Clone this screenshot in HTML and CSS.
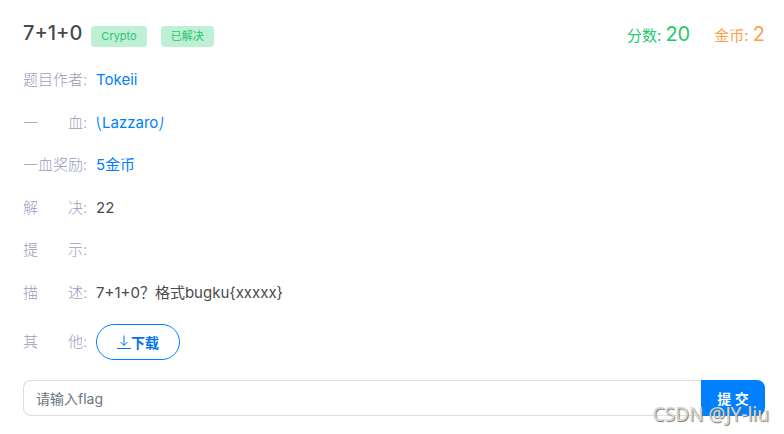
FILE: index.html
```html
<!DOCTYPE html>
<html lang="zh-CN">
<head>
<meta charset="utf-8">
<meta name="viewport" content="width=device-width, initial-scale=1">
<title>7+1+0</title>
<link rel="stylesheet" href="styles.css">
</head>
<body>
<main class="challenge">
  <header class="header">
    <h1 class="title">7+1+0</h1>
    <div class="badges">
      <span class="badge">Crypto</span>
      <span class="badge">已解决</span>
    </div>
    <div class="stats">
      <span class="stat stat-score">分数: <span class="stat-value">20</span></span>
      <span class="stat stat-coin">金币: <span class="stat-value">2</span></span>
    </div>
  </header>
  <dl class="details">
    <div class="row"><dt>题目作者:</dt><dd><a href="#">Tokeii</a></dd></div>
    <div class="row"><dt>一　　血:</dt><dd><a href="#"><span class="bracket">⎝</span>Lazzaro<span class="bracket">⎠</span></a></dd></div>
    <div class="row"><dt>一血奖励:</dt><dd class="reward">5金币</dd></div>
    <div class="row"><dt>解　　决:</dt><dd>22</dd></div>
    <div class="row"><dt>提　　示:</dt><dd></dd></div>
    <div class="row"><dt>描　　述:</dt><dd>7+1+0？格式bugku{xxxxx}</dd></div>
    <div class="row row-action"><dt>其　　他:</dt><dd>
      <button class="download" type="button">
        <svg class="icon" viewBox="0 0 14 14" aria-hidden="true"><path d="M7 0.5V10.5M3.5 7L7 10.5L10.5 7M0 13.5H14"/></svg>下载
      </button>
    </dd></div>
  </dl>
  <form class="flag-form">
    <input class="flag-input" type="text" placeholder="请输入flag" aria-label="flag">
    <button class="submit" type="submit">提 交</button>
  </form>
</main>
<div class="watermark">CSDN @JY-liu</div>
</body>
</html>
```
FILE: styles.css
```css
* {
  box-sizing: border-box;
}

body {
  margin: 0;
  background: #fff;
  color: #4a4a4a;
  font-family: Inter, "Noto Sans CJK SC", sans-serif;
  font-size: 15px;
  line-height: 1.5;
}

.challenge {
  padding: 18px 19px 18px 23px;
}

.header {
  display: flex;
  align-items: center;
  height: 30px;
  margin-bottom: 21px;
}

.title {
  margin: 0;
  font-size: 20px;
  font-weight: 500;
}

.badges {
  display: flex;
  gap: 14px;
  margin-left: 9px;
  padding-top: 6px;
}

.badge {
  height: 21px;
  padding: 0 10px;
  border-radius: 4px;
  background: #bfefd4;
  color: #28c76f;
  font-size: 11px;
  line-height: 21px;
  white-space: nowrap;
}

.stats {
  display: flex;
  gap: 24px;
  margin-left: auto;
  padding-top: 1px;
  white-space: nowrap;
}

.stat-score {
  color: #28c76f;
}

.stat-coin {
  color: #ff9f43;
}

.stat-value {
  font-size: 20px;
}

.details {
  display: flex;
  flex-direction: column;
  gap: 20px;
  margin: 0 0 20px;
}

.row {
  display: flex;
  align-items: center;
  height: 1.5em;
}

.row-action {
  height: 36px;
}

dt {
  width: 73px;
  color: #9a9dbc;
  font-weight: 300;
}

dd {
  margin: 0;
}

a,
.reward {
  color: #0080ff;
  text-decoration: none;
}

.bracket {
  font-size: 12px;
}

.download {
  display: flex;
  align-items: center;
  height: 36px;
  padding: 0 20px;
  border: 1px solid #0080ff;
  border-radius: 18px;
  background: #fff;
  color: #0073e6;
  font: 700 14px Inter, "Noto Sans CJK SC", sans-serif;
}

.icon {
  width: 14px;
  height: 14px;
  fill: none;
  stroke: currentColor;
}

.flag-form {
  display: flex;
}

.flag-input {
  flex: 1;
  min-width: 0;
  height: 36px;
  padding: 0 12px;
  border: 1px solid #ddd;
  border-right: 0;
  border-radius: 8px 0 0 8px;
  font: 14px Inter, "Noto Sans CJK SC", sans-serif;
}

.flag-input::placeholder {
  color: #6c757d;
}

.submit {
  width: 64px;
  height: 36px;
  padding: 0;
  border: 0;
  border-radius: 0 8px 8px 0;
  background: #0080ff;
  color: #fff;
  font: 700 14px Inter, "Noto Sans CJK SC", sans-serif;
}

.watermark {
  position: absolute;
  right: 15px;
  bottom: 8px;
  color: #d8d8d8;
  font-family: "Noto Sans", sans-serif;
  font-size: 19px;
  line-height: 24px;
  text-shadow: 1px 1px 1px #777;
  pointer-events: none;
}
```
